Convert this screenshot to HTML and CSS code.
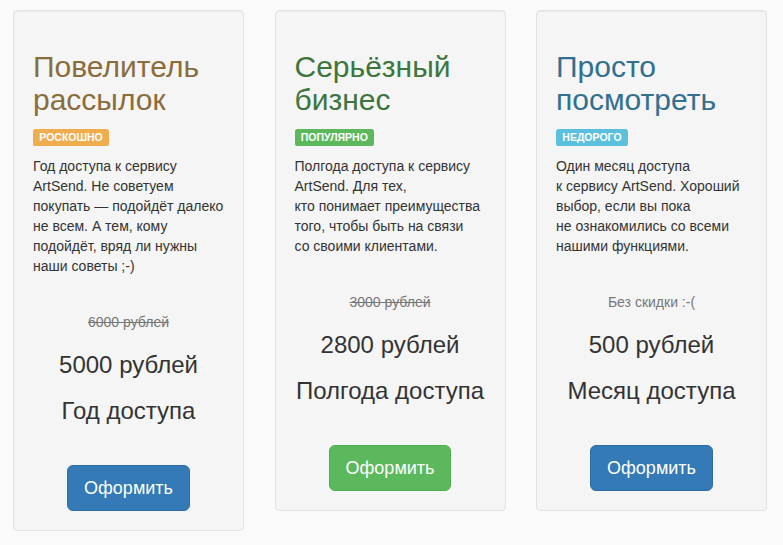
FILE: index.html
```html
<!DOCTYPE html>
<html lang="ru">
<head>
<meta charset="utf-8">
<title>Тарифы ArtSend</title>
<link rel="stylesheet" href="styles.css">
</head>
<body>
<div class="plans">
  <div class="well">
    <h2 class="title warning">Повелитель<br>рассылок</h2>
    <p class="tag"><span class="label label-warning">РОСКОШНО</span></p>
    <p class="desc">Год доступа к сервису<br>ArtSend. Не советуем<br>покупать — подойдёт далеко<br>не всем. А тем, кому<br>подойдёт, вряд ли нужны<br>наши советы ;-)</p>
    <div class="price">
      <p class="old"><s>6000 рублей</s></p>
      <h3>5000 рублей</h3>
      <h3>Год доступа</h3>
      <div class="action"><button class="btn btn-primary">Оформить</button></div>
    </div>
  </div>
  <div class="well">
    <h2 class="title success">Серьёзный<br>бизнес</h2>
    <p class="tag"><span class="label label-success">ПОПУЛЯРНО</span></p>
    <p class="desc">Полгода доступа к сервису<br>ArtSend. Для тех,<br>кто понимает преимущества<br>того, чтобы быть на связи<br>со своими клиентами.</p>
    <div class="price">
      <p class="old"><s>3000 рублей</s></p>
      <h3>2800 рублей</h3>
      <h3>Полгода доступа</h3>
      <div class="action"><button class="btn btn-success">Оформить</button></div>
    </div>
  </div>
  <div class="well">
    <h2 class="title info">Просто<br>посмотреть</h2>
    <p class="tag"><span class="label label-info">НЕДОРОГО</span></p>
    <p class="desc">Один месяц доступа<br>к сервису ArtSend. Хороший<br>выбор, если вы пока<br>не ознакомились со всеми<br>нашими функциями.</p>
    <div class="price">
      <p class="old">Без скидки :-(</p>
      <h3>500 рублей</h3>
      <h3>Месяц доступа</h3>
      <div class="action"><button class="btn btn-primary">Оформить</button></div>
    </div>
  </div>
</div>
</body>
</html>
```
FILE: styles.css
```css
* { box-sizing: border-box; }
html, body { margin: 0; padding: 0; }
body {
  background: #fafafa;
  font-family: "Liberation Sans", Arial, Helvetica, sans-serif;
  font-size: 14px;
  line-height: 20px;
  color: #333;
}
.plans {
  display: flex;
  align-items: flex-start;
  gap: 30.5px;
  padding: 10px 0 0 13px;
}
.well {
  width: 231px;
  flex: none;
  background: #f5f5f5;
  border: 1px solid #e3e3e3;
  border-radius: 4px;
  box-shadow: inset 0 1px 1px rgba(0,0,0,.05);
  padding: 19px;
}
.title {
  font-size: 30px;
  line-height: 33px;
  font-weight: normal;
  margin: 20px 0 10px;
}
.warning { color: #8a6d3b; }
.success { color: #3c763d; }
.info { color: #31708f; }
.tag { margin: 0 0 10px; }
.label {
  display: inline;
  padding: .2em .6em .3em;
  font-size: 10.5px;
  font-weight: bold;
  line-height: 1;
  color: #fff;
  border-radius: .25em;
  white-space: nowrap;
}
.label-warning { background: #f0ad4e; }
.label-success { background: #5cb85c; }
.label-info { background: #5bc0de; }
.desc { margin: 0; white-space: nowrap; }
.price {
  margin-top: 36px;
  text-align: center;
}
.old { margin: 0; color: #777; }
.price h3 {
  font-size: 24px;
  line-height: 26.4px;
  font-weight: normal;
  margin: 20px 0 0;
}
.action { margin-top: 40px; }
.btn {
  font-family: inherit;
  font-size: 18px;
  line-height: 24px;
  padding: 10px 16px;
  border-radius: 6px;
  border: 1px solid transparent;
  color: #fff;
  cursor: pointer;
  display: inline-block;
  vertical-align: top;
}
.btn-primary { background: #337ab7; border-color: #2e6da4; }
.btn-success { background: #5cb85c; border-color: #4cae4c; }
```
